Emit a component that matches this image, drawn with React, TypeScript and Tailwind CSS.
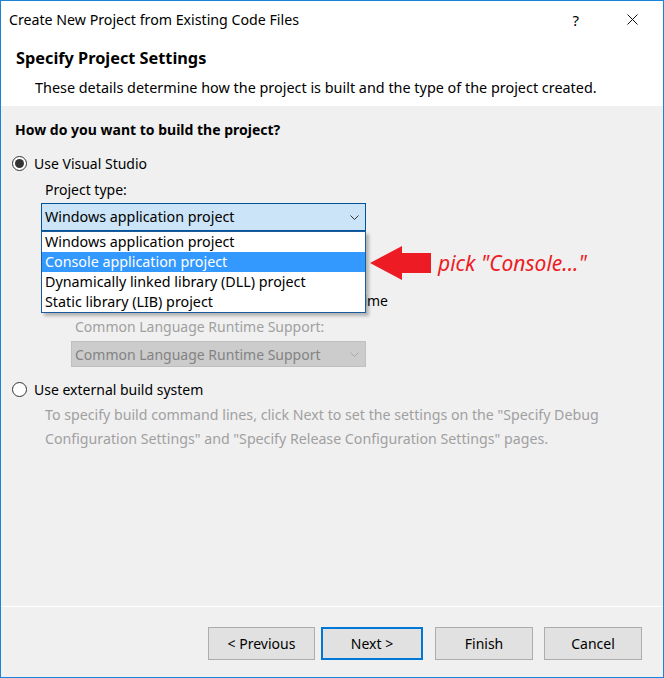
import React from "react";

const items = [
  "Windows application project",
  "Console application project",
  "Dynamically linked library (DLL) project",
  "Static library (LIB) project",
];

function Radio({ checked }: { checked?: boolean }) {
  return (
    <span className="flex h-[15px] w-[15px] shrink-0 items-center justify-center rounded-full border border-[#333333] bg-white">
      {checked && <span className="h-[9px] w-[9px] rounded-full bg-[#333333]" />}
    </span>
  );
}

function Chevron({ color }: { color: string }) {
  return (
    <svg width="9" height="5" viewBox="0 0 9 5" className="shrink-0">
      <path d="M0.5 0.5 L4.5 4.5 L8.5 0.5" fill="none" stroke={color} strokeWidth="1" />
    </svg>
  );
}

function Button({ label, width, primary }: { label: string; width: string; primary?: boolean }) {
  return (
    <button
      type="button"
      className={`flex h-[33px] items-center justify-center bg-[#e1e1e1] text-[14px] text-black ${width} ${
        primary ? "border-2 border-[#0078d7]" : "border border-[#adadad]"
      }`}
    >
      {label}
    </button>
  );
}

export default function App() {
  return (
    <div className="relative flex h-[678px] w-[664px] flex-col border border-[#1883d7] bg-[#f0f0f0] font-['Noto_Sans',sans-serif] text-[14px] text-black">
      {/* title bar */}
      <div className="flex h-[37px] shrink-0 items-center bg-white pl-[8px]">
        <span className="text-[14.2px] leading-[20px] text-black">Create New Project from Existing Code Files</span>
        <span className="ml-auto mr-[48px] text-[15px] leading-[20px]">?</span>
        <svg width="11" height="11" viewBox="0 0 11 11" className="mr-[25px]">
          <path d="M0.5 0.5 L10.5 10.5 M10.5 0.5 L0.5 10.5" stroke="#111" strokeWidth="1" />
        </svg>
      </div>

      {/* page header */}
      <div className="h-[68px] shrink-0 bg-white pt-[10px]">
        <div className="pl-[15px] text-[16.3px] font-bold leading-[20px]">Specify Project Settings</div>
        <div className="mt-[10px] pl-[34px] text-[14.4px] leading-[20px]">
          These details determine how the project is built and the type of the project created.
        </div>
      </div>

      {/* body */}
      <div className="flex flex-1 flex-col pt-[14px]">
        <div className="pl-[14px] font-bold leading-[20px]">How do you want to build the project?</div>

        <div className="mt-[13px] flex h-[20px] items-center gap-[7px] pl-[11px]">
          <Radio checked />
          <span>Use Visual Studio</span>
        </div>

        <div className="mt-[7px] pl-[44px] leading-[20px]">Project type:</div>

        <div className="relative ml-[40px] mt-[3px] w-[325px] text-[14.3px]">
          <div className="flex h-[28px] items-center border border-[#005499] bg-[#cce4f7] pl-[3px] pr-[6px]">
            <span className="flex-1 leading-[20px]">Windows application project</span>
            <Chevron color="#333333" />
          </div>
          <div className="absolute left-0 top-[28px] z-10 w-full border border-[#1a5a9e] bg-white shadow-[3px_3px_3px_rgba(0,0,0,0.25)]">
            {items.map((it, i) => (
              <div
                key={it}
                className={`h-[20px] pl-[3px] leading-[20px] ${i === 1 ? "bg-[#3399ff] text-white" : ""}`}
              >
                {it}
              </div>
            ))}
          </div>
        </div>

        {/* options hidden behind the open list */}
        <div className="mt-[9px] flex h-[24px] items-center gap-[6px] pl-[44px]">
          <span className="h-[13px] w-[13px] border border-[#333]" />
          <span>Add support for ATL</span>
        </div>
        <div className="flex h-[24px] items-center gap-[6px] pl-[44px]">
          <span className="h-[13px] w-[13px] border border-[#333]" />
          <span>Add support for MFC</span>
        </div>
        <div className="flex h-[24px] items-center gap-[6px] pl-[44px]">
          <span className="h-[13px] w-[13px] border border-[#333]" />
          <span className="w-[324px] whitespace-nowrap text-right">Add support for the Common Language Runtime</span>
        </div>

        <div className="mt-[5px] pl-[74px] leading-[20px] text-[#a0a0a0]">Common Language Runtime Support:</div>
        <div className="ml-[70px] mt-[4px] flex h-[26px] w-[295px] items-center border border-[#bfbfbf] bg-[#cccccc] pl-[3px] pr-[6px] text-[#838383]">
          <span className="flex-1">Common Language Runtime Support</span>
          <Chevron color="#a8a8a8" />
        </div>

        <div className="mt-[12px] flex h-[20px] items-center gap-[7px] pl-[11px]">
          <Radio />
          <span>Use external build system</span>
        </div>
        <div className="mt-[4px] pl-[44px] text-[14.2px] leading-[24px] text-[#a0a0a0]">
          To specify build command lines, click Next to set the settings on the "Specify Debug
          <br />
          Configuration Settings" and "Specify Release Configuration Settings" pages.
        </div>
      </div>

      <div className="h-px shrink-0 bg-white" />

      {/* footer */}
      <div className="flex h-[70px] shrink-0 items-start justify-end pr-[21px] pt-[20px]">
        <Button label="< Previous" width="w-[107px]" />
        <span className="w-[6px]" />
        <Button label="Next >" width="w-[102px]" primary />
        <span className="w-[12px]" />
        <Button label="Finish" width="w-[98px]" />
        <span className="w-[11px]" />
        <Button label="Cancel" width="w-[98px]" />
      </div>

      {/* annotation */}
      <svg width="61" height="34" viewBox="0 0 61 34" className="absolute left-[369px] top-[245px] z-20">
        <polygon points="0,17 32,0 32,7 61,7 61,27 32,27 32,34" fill="#ed1c24" />
      </svg>
      <span className="absolute left-[437px] top-[248px] z-20 whitespace-nowrap text-[21px] italic leading-[28px] text-[#ed1c24]">
        pick "Console..."
      </span>
    </div>
  );
}
